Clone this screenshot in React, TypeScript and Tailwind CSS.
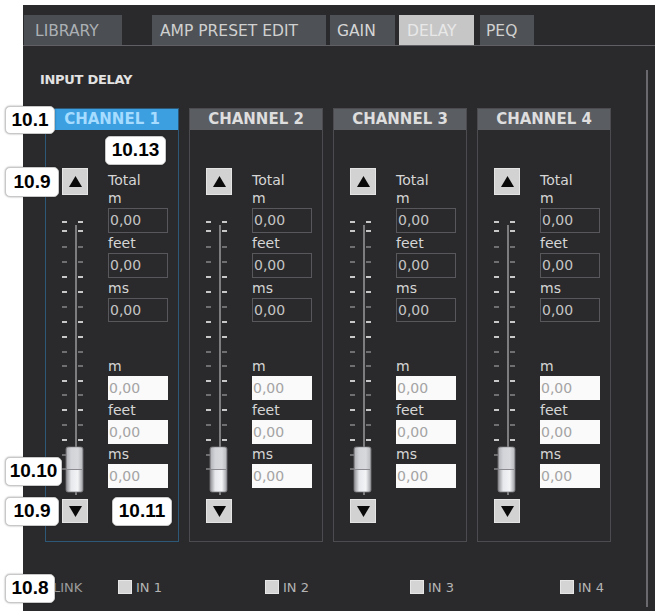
import React from "react";

const TICKS: [number, boolean][] = [
  [27, true], [36, true], [52, false], [67, false], [82, true], [97, true],
  [112, false], [127, true], [142, true], [157, false], [171, false], [186, true],
  [200, false], [215, true], [230, false], [245, true], [260, false], [274, false],
];

function Slider({ id }: { id: number }) {
  return (
    <svg width="30" height="304" viewBox="0 0 30 304" className="block">
      <defs>
        <linearGradient id={`th${id}`} x1="0" y1="0" x2="1" y2="0">
          <stop offset="0" stopColor="#8c8c90" />
          <stop offset="0.3" stopColor="#e6e8ec" />
          <stop offset="0.7" stopColor="#f2f4f6" />
          <stop offset="1" stopColor="#9a9ca0" />
        </linearGradient>
      </defs>
      <line x1="16" y1="30" x2="16" y2="300" stroke="#9a9a9c" strokeWidth="1.5" />
      {TICKS.map(([y, b], i) => (
        <g key={i} fill={b ? "#c8c8c8" : "#6f6f72"}>
          <rect x="2" y={y - 1} width="5" height="2" />
          <rect x="18" y={y - 1} width="5" height="2" />
        </g>
      ))}
      <rect x="6" y="252" width="17" height="45" rx="2" fill={`url(#th${id})`} stroke="#7a7a7e" strokeWidth="0.8" />
      <rect x="7" y="253" width="15" height="21" fill="#c4c6cc" opacity="0.6" />
      <line x1="7" y1="274.5" x2="22" y2="274.5" stroke="#8a8a90" strokeWidth="1" />
    </svg>
  );
}

function ArrowBtn({ up, h }: { up: boolean; h: string }) {
  return (
    <div className={`w-[26px] ${h} bg-[#d2d2d2] border border-[#e4e4e4] flex items-center justify-center`}>
      <svg width="13" height="11" viewBox="0 0 13 11">
        {up ? <polygon points="6.5,0 13,11 0,11" fill="#0a0a0a" /> : <polygon points="0,0 13,0 6.5,11" fill="#0a0a0a" />}
      </svg>
    </div>
  );
}

function Lbl({ t, h = "h-[20px]" }: { t: string; h?: string }) {
  return <div className={`${h} text-[14px] leading-[20px] text-[#d6d6d6]`}>{t}</div>;
}

function DarkIn({ h = "h-[25px]" }: { h?: string }) {
  return (
    <div className={`${h} w-[60px] border border-[#58585c] text-[14px] leading-[22px] pl-[1px] text-[#c4c4c4]`}>0,00</div>
  );
}

function WhiteIn() {
  return (
    <div className="h-[24px] w-[60px] bg-[#fafafa] text-[14px] leading-[24px] pl-[1px] text-[#a4a4a4]">0,00</div>
  );
}

function Channel({ n, active }: { n: number; active: boolean }) {
  return (
    <div className={`w-[134px] h-[434px] border ${active ? "border-[#2d5878]" : "border-[#4c4c50]"} flex flex-col`}>
      <div
        className={`h-[21px] text-center font-bold text-[15px] leading-[21px] ${
          active ? "bg-[#3b9fe0] text-[#a6dcff]" : "bg-[#5a5d62] text-[#dedede]"
        }`}
      >
        CHANNEL {n}
      </div>
      <div className="flex pt-[38px] pl-[14px]">
        <div className="w-[30px] flex flex-col items-center">
          <ArrowBtn up h="h-[27px]" />
          <Slider id={n} />
          <ArrowBtn up={false} h="h-[24px]" />
        </div>
        <div className="ml-[18px] w-[60px] pt-[2px] flex flex-col">
          <Lbl t="Total" h="h-[18px]" />
          <Lbl t="m" />
          <DarkIn />
          <Lbl t="feet" />
          <DarkIn />
          <Lbl t="ms" />
          <DarkIn h="h-[24px]" />
          <div className="h-[34px]" />
          <Lbl t="m" />
          <WhiteIn />
          <Lbl t="feet" />
          <WhiteIn />
          <Lbl t="ms" />
          <WhiteIn />
        </div>
      </div>
    </div>
  );
}

function Tag({ t, cls }: { t: string; cls: string }) {
  return (
    <div
      className={`absolute ${cls} bg-white border border-[#c8c8c8] rounded-[5px] shadow-[0_0_2px_rgba(0,0,0,0.4)] flex items-center justify-center text-[19px] font-bold text-black`}
      style={{ fontFamily: '"Liberation Sans", Arial, sans-serif' }}
    >
      {t}
    </div>
  );
}

function Check({ t, w }: { t: string; w: string }) {
  return (
    <div className={`${w} flex items-center`}>
      <div className="w-[14px] h-[14px] bg-[#d4d4d4] border border-[#e6e6e6]" />
      <span className="ml-[4px] text-[13px] text-[#b4b4b4] leading-none">{t}</span>
    </div>
  );
}

export default function App() {
  return (
    <div
      className="relative w-[657px] h-[615px] bg-white overflow-hidden"
      style={{ fontFamily: '"DejaVu Sans", Verdana, sans-serif' }}
    >
      <div className="ml-[23px] mt-[5px] w-[632px] h-[606px] bg-[#2a2a2c] flex flex-col">
        <div className="pt-[10px] pl-[1px] flex border-b border-[#606064] text-[15.5px]">
          <div className="w-[98px] h-[30px] bg-[#4b4e52] text-[#abb0b5] pl-[11px] pt-[3px] flex items-center">LIBRARY</div>
          <div className="ml-[30px] w-[174px] h-[30px] bg-[#4e5256] text-[#d0d0d0] pl-[8px] pt-[3px] flex items-center">AMP PRESET EDIT</div>
          <div className="ml-[4px] w-[65px] h-[30px] bg-[#4e5256] text-[#d6d6d6] pl-[7px] pt-[3px] flex items-center">GAIN</div>
          <div className="ml-[4px] w-[75px] h-[30px] bg-[#c6c6c6] text-[#e8e8e8] pl-[8px] pt-[3px] flex items-center">DELAY</div>
          <div className="ml-[6px] w-[54px] h-[30px] bg-[#4e5256] text-[#d0d0d0] pl-[6px] pt-[3px] flex items-center">PEQ</div>
        </div>
        <div className="flex-1 flex">
          <div className="flex-1 flex flex-col">
            <div className="mt-[26px] pl-[17px] text-[13px] leading-[16px] font-bold text-[#e2e2e2] tracking-[-0.3px]">
              INPUT DELAY
            </div>
            <div className="mt-[20px] pl-[22px] flex gap-[10px]">
              <Channel n={1} active />
              <Channel n={2} active={false} />
              <Channel n={3} active={false} />
              <Channel n={4} active={false} />
            </div>
            <div className="mt-[38px] pl-[30px] flex items-center h-[14px]">
              <div className="w-[65px] text-[13px] text-[#9c9c9c] leading-none">LINK</div>
              <Check t="IN 1" w="w-[147px]" />
              <Check t="IN 2" w="w-[145px]" />
              <Check t="IN 3" w="w-[150px]" />
              <Check t="IN 4" w="w-[50px]" />
            </div>
          </div>
          <div className="w-[2px] bg-[#6a6a6e] mt-[24px] mb-[4px] mr-[7px]" />
        </div>
      </div>

      <Tag t="10.1" cls="left-[5px] top-[106px] w-[50px] h-[28px]" />
      <Tag t="10.13" cls="left-[105px] top-[136px] w-[61px] h-[29px]" />
      <Tag t="10.9" cls="left-[5px] top-[167px] w-[54px] h-[30px]" />
      <Tag t="10.10" cls="left-[5px] top-[457px] w-[57px] h-[29px]" />
      <Tag t="10.9" cls="left-[5px] top-[497px] w-[54px] h-[29px]" />
      <Tag t="10.11" cls="left-[112px] top-[497px] w-[60px] h-[29px]" />
      <Tag t="10.8" cls="left-[5px] top-[574px] w-[50px] h-[29px]" />
    </div>
  );
}
